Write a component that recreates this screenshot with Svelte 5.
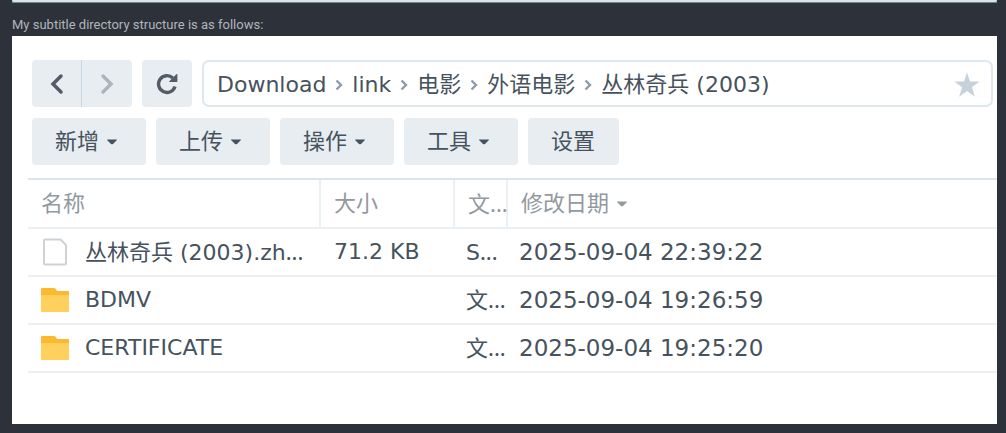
<script lang="ts">
  interface Entry {
    kind: 'file' | 'folder'
    name: string
    nameCut?: boolean
    size: string
    type: string
    modified: string
  }

  const path = ['Download', 'link', '电影', '外语电影', '丛林奇兵 (2003)']
  const menus = ['新增', '上传', '操作', '工具']

  const entries: Entry[] = [
    {
      kind: 'file',
      name: '丛林奇兵 (2003).zh',
      nameCut: true,
      size: '71.2 KB',
      type: 'S',
      modified: '2025-09-04 22:39:22'
    },
    { kind: 'folder', name: 'BDMV', size: '', type: '文', modified: '2025-09-04 19:26:59' },
    { kind: 'folder', name: 'CERTIFICATE', size: '', type: '文', modified: '2025-09-04 19:25:20' }
  ]
</script>

{#snippet caret()}
  <svg class="caret" viewBox="0 0 10 6" aria-hidden="true">
    <path d="M0.600 0.500h8.800q.9 0 .3.700L6 4.900q-1 .8-2 0L.3 1.200Q-.3.500.6.500z" />
  </svg>
{/snippet}

<main>
  <div class="previous"><div></div></div>
  <p>My subtitle directory structure is as follows:</p>

  <section lang="zh-CN">
    <div class="bar">
      <div class="history">
        <button aria-label="后退">
          <svg viewBox="0 0 14 22" aria-hidden="true"><path d="M11 3L3 11l8 8" /></svg>
        </button>
        <button aria-label="前进" disabled>
          <svg viewBox="0 0 14 22" aria-hidden="true"><path d="M3 3l8 8-8 8" /></svg>
        </button>
      </div>
      <button class="refresh" aria-label="刷新">
        <svg viewBox="0 0 22 22" aria-hidden="true">
          <path class="arc" d="M19 13.500A8.400 8.400 0 1 1 16.800 5" />
          <path class="head" d="M20.400 1.300q1-.9 1 .4v6.600q0 .8-.8.800h-6.800q-1.300 0-.4-.9z" />
        </svg>
      </button>
      <nav>
        {#each path as part, i}
          {#if i > 0}
            <svg class="sep" viewBox="0 0 8 12" aria-hidden="true"><path d="M1.500 1.500L6 6l-4.500 4.500" /></svg>
          {/if}
          <a href="#{part}">{part}</a>
        {/each}
        <button class="star" aria-label="收藏">
          <svg viewBox="0 0 26 26" aria-hidden="true">
            <path d="M13 0.500l3 9.100h9.600l-7.700 5.700 3 9.400-7.900-5.800-7.900 5.800 3-9.400L0.400 9.600H10z" />
          </svg>
        </button>
      </nav>
    </div>

    <div class="bar">
      {#each menus as menu}
        <button class="menu drop">{menu}{@render caret()}</button>
      {/each}
      <button class="menu">设置</button>
    </div>

    <table>
      <thead>
        <tr>
          <th class="name">名称</th>
          <th class="size">大小</th>
          <th class="type">文<span class="more">...</span></th>
          <th><span class="sorted">修改日期{@render caret()}</span></th>
        </tr>
      </thead>
      <tbody>
        {#each entries as entry}
          <tr>
            <td>
              <div class="entry">
                {#if entry.kind === 'folder'}
                  <svg viewBox="0 0 28 28" aria-hidden="true">
                    <path fill="#fdb92e" d="M0 3q0-1 1-1h12q1 0 1.500.7L16 5h11q1 0 1 1v6H0z" />
                    <path fill="#ffd15c" d="M0 9h28v16q0 1-1 1H1q-1 0-1-1z" />
                  </svg>
                {:else}
                  <svg viewBox="0 0 28 28" aria-hidden="true">
                    <path
                      fill="#fff"
                      stroke="#cfd1d4"
                      stroke-width="2"
                      d="M4 1.500h15.500L25 7v18.500q0 1-1 1H4q-1 0-1-1v-23q0-1 1-1z"
                    />
                  </svg>
                {/if}
                <span>{entry.name}{#if entry.nameCut}<span class="more">...</span>{/if}</span>
              </div>
            </td>
            <td>{entry.size}</td>
            <td class="kind">{entry.type}<span class="more">...</span></td>
            <td class="date">{entry.modified}</td>
          </tr>
        {/each}
      </tbody>
    </table>
  </section>
</main>

<style>
  :global(body) {
    margin: 0;
    background: #2d3139;
  }

  main {
    padding: 0 9px 9px 12px;
  }

  .previous {
    height: 3px;
    background: #5f8f91;
  }

  .previous div {
    height: 2px;
    background: #dfe1e8;
    border-radius: 0 0 4px 4px;
  }

  p {
    margin: 0;
    padding: 13px 0 2px;
    font: 13px/18px Roboto, sans-serif;
    color: #b1b5bd;
  }

  section {
    padding: 24px 0 51px 16px;
    font: 22px/32px 'DejaVu Sans', 'Noto Sans CJK SC', sans-serif;
    color: #46525d;
    background: #fff;
  }

  .bar {
    display: flex;
    gap: 10px;
    margin: 0 4px 11px;
  }

  button {
    display: flex;
    align-items: center;
    justify-content: center;
    box-sizing: border-box;
    height: 47px;
    padding: 0;
    font: inherit;
    color: inherit;
    background: #e8edf1;
    border: 0;
    border-radius: 4px;
  }

  .history {
    display: flex;
  }

  .history button {
    width: 49px;
    border-radius: 4px 0 0 4px;
  }

  .history button + button {
    width: 51px;
    border-left: 1px solid #c8d6e6;
    border-radius: 0 4px 4px 0;
  }

  .history svg {
    width: 14px;
    height: 22px;
    fill: none;
    stroke: #525c66;
    stroke-width: 3.5;
    stroke-linecap: round;
  }

  .history button:disabled svg {
    stroke: #adb4bc;
  }

  .refresh {
    width: 50px;
  }

  .refresh svg {
    width: 22px;
    height: 22px;
  }

  .arc {
    fill: none;
    stroke: #525c66;
    stroke-width: 3.4;
  }

  .head {
    fill: #525c66;
  }

  nav {
    display: flex;
    flex: 1;
    align-items: center;
    gap: 9px;
    box-sizing: border-box;
    height: 47px;
    padding: 2px 11px 0 13px;
    border: 2px solid #dfe7ee;
    border-radius: 7px;
  }

  a {
    color: inherit;
    text-decoration: none;
    white-space: nowrap;
  }

  .sep {
    width: 8px;
    height: 12px;
    fill: none;
    stroke: #8f9bad;
    stroke-width: 2.4;
  }

  .star {
    height: 26px;
    margin-left: auto;
    background: none;
  }

  .star svg {
    width: 26px;
    height: 26px;
    fill: #c6d1dc;
  }

  .menu {
    gap: 8px;
    padding: 0 24px 0 23px;
  }

  .drop {
    padding-right: 29px;
  }

  .caret {
    width: 10px;
    height: 6px;
    fill: currentColor;
  }

  table {
    width: 100%;
    margin-top: 13px;
    table-layout: fixed;
    border-top: 2px solid #dbe5ed;
    border-spacing: 0;
  }

  th,
  td {
    box-sizing: border-box;
    height: 48px;
    padding: 0 0 0 13px;
    text-align: left;
    white-space: nowrap;
    border-bottom: 2px solid #ebf0f4;
  }

  th {
    height: 49px;
    font-weight: normal;
    color: #92999f;
    border-right: 2px solid #ebf0f4;
  }

  th:last-child {
    border-right: 0;
  }

  .name {
    width: 293px;
  }

  .size {
    width: 134px;
  }

  .type {
    width: 53px;
  }

  .entry {
    display: flex;
    align-items: center;
    gap: 16px;
  }

  .entry svg {
    width: 28px;
    height: 28px;
  }

  .sorted {
    display: flex;
    align-items: center;
    gap: 8px;
  }

  .more {
    font-family: 'Noto Sans', sans-serif;
  }

  td.kind,
  td.date {
    padding-left: 11px;
  }

  td.date {
    font-size: 23px;
  }
</style>
